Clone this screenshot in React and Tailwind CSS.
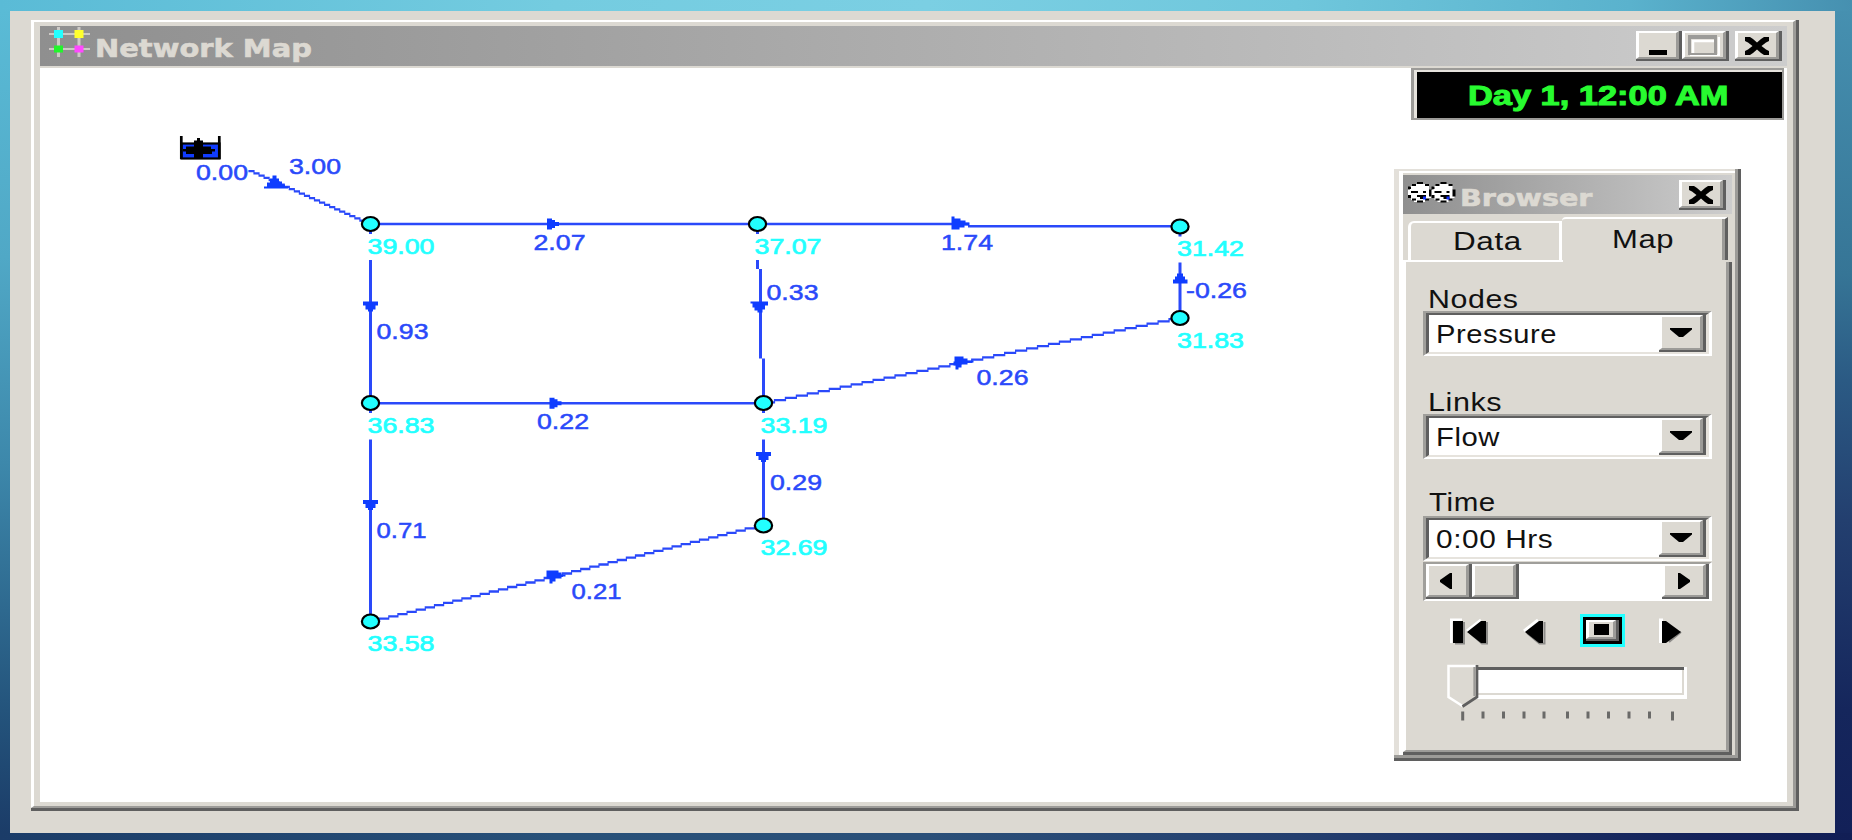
import React, { useLayoutEffect, useRef, useState } from "react";

/* Text stretched horizontally to a given width, like a scaled bitmap font. */
function Fit({ w, className = "", children }) {
  const ref = useRef(null);
  const [scale, setScale] = useState(1);
  useLayoutEffect(() => {
    const natural = ref.current.offsetWidth;
    if (natural) setScale(w / natural);
  }, [w]);
  return (
    <div className="h-[25px] w-0 overflow-visible whitespace-nowrap">
      <span
        ref={ref}
        className={"inline-block origin-left " + className}
        style={{ transform: `scaleX(${scale})` }}
      >
        {children}
      </span>
    </div>
  );
}

const ui = "font-['Liberation_Sans',Arial,sans-serif] text-[26px] leading-[26px] tracking-[0.5px] text-[#111]";

function Bevel({ className = "", children }) {
  return (
    <div className={"shrink-0 border-b-2 border-r-3 border-[#5f5f5f] bg-[#dcd9d2] " + className}>
      <div className="flex h-full w-full items-center justify-center border-b-2 border-l-3 border-r-3 border-t-2 border-b-[#9c9b98] border-l-white border-r-[#9c9b98] border-t-white">
        {children}
      </div>
    </div>
  );
}

function CloseGlyph() {
  return (
    <svg className="mt-px h-[18px] w-6" viewBox="0 0 24 18" fill="#000">
      <path d="M0 0h5l3 2 4 3.500 4-3.500 3-2h5v4l-3 1.500-4.500 3.500 4.500 3.500 3 1.500v4h-5l-3-2-4-3.500-4 3.500-3 2H0v-4l3-1.500L7.500 9 3 5.500 0 4z" />
    </svg>
  );
}

function NetworkIcon() {
  return (
    <svg className="h-8 w-[41px]" viewBox="0 0 41 32">
      <path d="M8 1h3v30H8zM28.500 1h3v30h-3zM0 7h41v2H0zM0 22h41v2H0z" fill="#ccc9c5" />
      <rect x="5" y="4" width="9" height="8" fill="#2ff" />
      <rect x="25.500" y="4" width="9" height="8" fill="#ffff2c" />
      <rect x="5" y="19.500" width="9" height="7" fill="#22f52c" />
      <rect x="25.500" y="19.500" width="9" height="7" fill="#ff48ff" />
    </svg>
  );
}

function Face({ x }) {
  return (
    <g transform={`translate(${x} 0)`}>
      <path d="M6 2h12v2h3v4h2v8h-2v2h-4v2H6v-2H3v-2H0V8h2V4h4z" fill="#fff" />
      <path
        d="M9 0h6v2H9zM4 2h4v2H4zM17 2h4v2h-4zM0 4.500h3v2.500H0zM0 13h3v3H0zM4 16.500h4v2H4zM9 18.500h6v2H9zM17 16.500h4v2h-4zM21 7.500h3v7h-3zM3 9h7v2H3zM15 9h3v2h-3zM9 13h9v4H12v-2H9z"
        fill="#000"
      />
      <rect x="15" y="14.500" width="3" height="3" fill="#1030ff" />
    </g>
  );
}

function FacesIcon() {
  return (
    <svg className="h-[21px] w-12" viewBox="0 0 48 21">
      <Face x={0} />
      <Face x={23.500} />
    </svg>
  );
}

/* Aliased line made of one horizontal run for each pixel row. */
function stairs(x0, y0, x1, y1) {
  const n = Math.max(1, Math.round(Math.abs(y1 - y0) / 2.23));
  const run = (x1 - x0) / n;
  let d = "";
  for (let i = 0; i < n; i++) {
    const y = y0 + ((y1 - y0) * (i + 0.5)) / n;
    d += `M${(x0 + run * i - 0.6).toFixed(1)} ${y.toFixed(1)}h${(run + 1.2).toFixed(1)}`;
  }
  return d;
}

const junctions = [
  { x: 370.5, y: 224, v: "39.00", w: 67, spur: true },
  { x: 757.5, y: 224, v: "37.07", w: 67, spur: true },
  { x: 1180, y: 226.5, v: "31.42", w: 67, spur: true },
  { x: 1180, y: 318, v: "31.83", w: 67 },
  { x: 370.5, y: 403, v: "36.83", w: 67, spur: true },
  { x: 763.5, y: 403, v: "33.19", w: 67, spur: true },
  { x: 763.5, y: 525.5, v: "32.69", w: 67 },
  { x: 370.5, y: 621.5, v: "33.58", w: 67 },
];

const flows = [
  [197, 179.500, 50, "0.00"],
  [290, 173.500, 50, "3.00"],
  [534.500, 249.500, 50, "2.07"],
  [942, 249.500, 50, "1.74"],
  [377.500, 339, 50, "0.93"],
  [767.500, 299.500, 50, "0.33"],
  [1187, 297.500, 59, "-0.26"],
  [538, 428.500, 50, "0.22"],
  [977.500, 384.500, 50, "0.26"],
  [377.500, 537.500, 48, "0.71"],
  [771, 489.500, 50, "0.29"],
  [572.500, 598.500, 48, "0.21"],
];

const down = (x, y) => `M${x - 7.5} ${y}h15v4h-2.500v4h-2.500v2h-5v-2h-2.500v-4h-2.500z`;
const right = (x, y) => `M${x} ${y - 5.5}h5v1.500h3v2h4v4h-4v2h-3v1.500h-5z`;

function NetworkDiagram() {
  return (
    <svg className="absolute inset-0 h-[734px] w-[1747px]" viewBox="40 68 1747 734">
      <g stroke="#2a49fa" fill="none">
        <path
          strokeWidth="2.400"
          d="M370 224H757M757 224H969M968 226.200H1180M370 403.200H763"
        />
        <path
          strokeWidth="3"
          d="M370.500 260V403M370.500 439.500V621M757.500 260V269M760.500 269V358.500M763.500 358.500V403M763.500 439.500V525M1180 262.500V318"
        />
        <g strokeWidth="2.300">
          <path d={stairs(249, 170, 370, 224)} />
          <path d={stairs(763.500, 403.500, 1180, 318)} />
          <path d={stairs(370.500, 622, 763.500, 525)} />
        </g>
      </g>
      <g fill="#0f3dff">
        <path d={right(547, 224)} />
        <path d={right(549.500, 403.300)} />
        <path d="M951.500 216.500h3v2h6v2h5v2h4v3h-5v2h-5v2h-8z" />
        <path d="M954.500 356.500h9v2h4v2h6v2h-6v2h-6v3h-3v2h-3v-4h-2v-4h1z" />
        <path d="M546.500 570.500h12v2h3v2h4v2h-4v2h-6v3h-3v2h-3v-5h-3z" />
        <path d={down(370.500, 301.500)} />
        <path d={down(370.500, 500)} />
        <path d={down(763.500, 452)} />
        <path d="M750.500 301.500h17.500v4h-3v4h-2.500v3h-5v-2h-3v-3h-2v-4h-2z" />
        <path d="M1173 283.500v-4h2v-3h2v-3h6v3h2v3h2.500v4z" />
        <path d="M264 188.500v-2h3v-4h3v-4h2.500v-3h4v3h2.500v3h3v3h3v2h3v2z" />
      </g>
      <g stroke="#000" fill="#000">
        <rect x="181.500" y="143.500" width="38" height="15" fill="#103cff" strokeWidth="2.200" />
        <path strokeWidth="2.700" fill="none" d="M181.300 136V159M219.300 136V159" />
        <path
          stroke="none"
          d="M183 149h3v-2.500h8v-6h3v-2.500h3v2.500h3v6h8v2.500h4v2.500h-3v2.500h-9v5h-9v-5h-8v-2.500h-3z"
        />
      </g>
      {junctions.map((j) => (
        <g key={j.v}>
          {j.spur && <rect x={j.x - 1.5} y={j.y + 7} width="3" height="3" fill="#2a49fa" />}
          <ellipse cx={j.x} cy={j.y} rx="8.600" ry="7" fill="#2ff" stroke="#000" strokeWidth="2.200" />
          <text
            x={j.x - 3}
            y={j.y + 29.5}
            textLength={j.w}
            lengthAdjust="spacingAndGlyphs"
            fill="#2ff"
            className="font-['Liberation_Sans',Arial,sans-serif] text-[22px]"
            stroke="#2ff"
            strokeWidth="0.700"
          >
            {j.v}
          </text>
        </g>
      ))}
      {flows.map(([x, y, w, t]) => (
        <text
          key={x + t}
          x={x - 1}
          y={y}
          textLength={w + 2}
          lengthAdjust="spacingAndGlyphs"
          fill="#2a49fa"
          stroke="#2a49fa"
          strokeWidth="0.500"
          className="font-['Liberation_Sans',Arial,sans-serif] text-[22px]"
        >
          {t}
        </text>
      ))}
    </svg>
  );
}

function Combo({ w, children }) {
  return (
    <div className="h-[45px] w-[289px] border-b-2 border-l-3 border-r-3 border-t-2 border-b-white border-l-[#a09f9b] border-r-white border-t-[#a09f9b]">
      <div className="flex h-full border-b-2 border-l-3 border-r-3 border-t-2 border-b-[#e6e3dd] border-l-[#5f5f5f] border-r-[#e6e3dd] border-t-[#5f5f5f] bg-white">
        <div className="flex-1 pl-[7px] pt-1.5">
          <Fit w={w} className={ui}>{children}</Fit>
        </div>
        <Bevel className="w-[47px]">
          <svg className="h-[9px] w-[22px]" viewBox="0 0 22 9">
            <path d="M0 0h22v1.500l-9 7.500H9L0 1.500z" />
          </svg>
        </Bevel>
      </div>
    </div>
  );
}

function BrowserPanel() {
  return (
    <div className="absolute left-[1354px] top-[101px] h-[592px] w-[347px] border-b-3 border-r-3 border-[#5f5f5f] bg-[#e3e0da]">
      <div className="h-full border-b-3 border-r-3 border-[#9c9b98] pl-[5px] pt-0.5">
        <div className="flex h-full flex-col border-l-4 border-t-2 border-white bg-[#dcd9d2] pr-[3px] pt-0.5">
          <div className="flex h-[39px] shrink-0 bg-linear-to-r from-[#8f8f8f] to-[#cdcdcd] pl-[5px] pr-1.5 pt-[5px]">
            <div className="w-[52px] pt-[2px]">
              <FacesIcon />
            </div>
            <div className="flex-1 pt-[5px]">
              <Fit
                w={133}
                className="font-['DejaVu_Sans',Verdana,sans-serif] text-[23px] font-bold leading-[26px] text-[#dcd9d2] [-webkit-text-stroke:0.6px_#dcd9d2]"
              >
                Browser
              </Fit>
            </div>
            <Bevel className="h-[30px] w-[47px]">
              <CloseGlyph />
            </Bevel>
          </div>

          <div className="mt-[3px] flex h-[43px] shrink-0 items-end pl-[5px]">
            <div className="h-[39px] w-[154px] rounded-tl-[6px] border-l-3 border-r-3 border-t-2 border-white pl-[42px] pt-[5px]">
              <Fit w={69} className={ui}>Data</Fit>
            </div>
            <div className="h-[43px] w-[166px] rounded-tl-[4px] border-r-3 border-t-2 border-r-[#5f5f5f] border-t-white">
              <div className="h-full border-r-3 border-[#9c9b98] pl-[50px] pt-[7px]">
                <Fit w={62} className={ui}>Map</Fit>
              </div>
            </div>
          </div>

          <div className="h-0.5 w-[160px] shrink-0 bg-white" />
          <div className="h-[493px] shrink-0 border-b-3 border-r-3 border-[#5f5f5f]">
            <div className="h-full border-b-2 border-l-3 border-r-3 border-b-[#9c9b98] border-l-white border-r-[#9c9b98] pl-[17px]">
              <div className="h-[49px] pl-[5px] pt-6">
                <Fit w={91} className={ui}>Nodes</Fit>
              </div>
              <Combo w={121}>Pressure</Combo>
              <div className="h-[58px] pl-[5px] pt-[33px]">
                <Fit w={74} className={ui}>Links</Fit>
              </div>
              <Combo w={64}>Flow</Combo>
              <div className="h-[57px] pl-[6px] pt-[30px]">
                <Fit w={67} className={ui}>Time</Fit>
              </div>
              <Combo w={117}>0:00 Hrs</Combo>

              <div className="mt-px flex h-[39px] w-[289px] border-b-2 border-l-3 border-r-3 border-t-2 border-b-white border-l-[#a09f9b] border-r-white border-t-[#a09f9b] bg-white">
                <Bevel className="w-[46px]">
                  <svg className="mr-1 h-4 w-3" viewBox="0 0 12 16">
                    <path d="M12 0v16h-2L0 9V7L10 0z" />
                  </svg>
                </Bevel>
                <Bevel className="w-[47px]" />
                <div className="flex-1" />
                <Bevel className="w-[47px]">
                  <svg className="h-4 w-3" viewBox="0 0 12 16">
                    <path d="M0 0v16h2l10-7V7L2 0z" />
                  </svg>
                </Bevel>
              </div>

              <div className="mt-[13px] flex h-[33px] items-center pl-[27px]">
                <svg className="mt-0.5 h-[27px] w-[40px]" viewBox="0 0 40 27">
                  <path d="M1 25V2h11M17 13L31 2" stroke="#fff" strokeWidth="3" fill="none" />
                  <path d="M5 25.500h9V4M37 4v21.500h-5L20 15" stroke="#8d8c89" strokeWidth="2" fill="none" />
                  <path d="M3 3h10v22H3zM17 14L31 3h5v22h-5z" />
                </svg>
                <svg className="ml-[32px] mt-0.5 h-[27px] w-[26px]" viewBox="0 0 26 27">
                  <path d="M2 13L16 2" stroke="#fff" strokeWidth="3" fill="none" />
                  <path d="M22.500 4v21.500h-5L5 15" stroke="#8d8c89" strokeWidth="2" fill="none" />
                  <path d="M3 14L17 3h4v22h-4z" />
                </svg>
                <div className="ml-8 h-[33px] w-[45px] border-3 border-[#2ff]">
                  <div className="h-full border-3 border-black">
                    <Bevel className="h-full">
                      <div className="h-[11px] w-[15px] shrink-0 bg-black" />
                    </Bevel>
                  </div>
                </div>
                <svg className="ml-[34px] mt-0.5 h-[27px] w-6" viewBox="0 0 24 27">
                  <path d="M1.500 25V2H4" stroke="#fff" strokeWidth="3" fill="none" />
                  <path d="M10 24L22 14" stroke="#8d8c89" strokeWidth="2" fill="none" />
                  <path d="M3 3h4l15 11L7 25H3z" />
                </svg>
              </div>

              <svg className="ml-[22px] mt-[17px] h-[60px] w-[246px]" viewBox="0 0 246 60">
                <rect x="20" y="3" width="222" height="32" fill="#fff" />
                <path d="M30 3h209v3H30z" fill="#5f5f5f" />
                <path d="M30 31h209V6h-2v23H30z" fill="#dcd9d2" />
                <path d="M2 1h31v32L18 43 2 33z" fill="#dcd9d2" />
                <path d="M31 2H3.500v31l14 9" stroke="#fff" strokeWidth="2.500" fill="none" />
                <path d="M32 1v32L17.500 42.500" stroke="#5f5f5f" strokeWidth="2.700" fill="none" />
                <path d="M29.500 3v29" stroke="#9c9b98" strokeWidth="2.300" />
                <path
                  d="M17.700 47.500v9M38 47.500v7M58.500 47.500v7M79 47.500v7M99 47.500v7M122.500 47.500v7M143 47.500v7M163.500 47.500v7M184 47.500v7M204.500 47.500v7M227.500 47.500v9"
                  stroke="#6a6a68"
                  strokeWidth="3"
                />
              </svg>
            </div>
          </div>
        </div>
      </div>
    </div>
  );
}

function MapWindow() {
  return (
    <div className="h-[791px] w-[1768px] border-b-3 border-r-3 border-[#5f5f5f]">
      <div className="flex h-full flex-col gap-0.5 border-b-2 border-l-3 border-r-3 border-t-2 border-b-[#9c9b98] border-l-white border-r-[#9c9b98] border-t-white px-1.5 pb-1 pt-1">
        <div className="flex h-10 shrink-0 bg-linear-to-r from-[#8f8f8f] to-[#cdcdcd] pl-[9px] pr-[5px]">
          <NetworkIcon />
          <div className="flex-1 pl-[5px] pt-[10px]">
            <Fit
              w={217}
              className="font-['DejaVu_Sans',Verdana,sans-serif] text-[24px] font-bold leading-[26px] text-[#dcd9d2] [-webkit-text-stroke:0.6px_#dcd9d2]"
            >
              Network Map
            </Fit>
          </div>
          <div className="flex pt-[5px]">
            <Bevel className="h-[30px] w-[46px]">
              <div className="ml-px mt-[15px] h-[5px] w-[18px] bg-black" />
            </Bevel>
            <Bevel className="h-[30px] w-[47px]">
              <svg className="h-[21px] w-8" viewBox="0 0 32 21">
                <path d="M2 20.500H31V2" stroke="#fff" strokeWidth="2.500" fill="none" />
                <path d="M5 19V6h22" stroke="#fff" strokeWidth="2.500" fill="none" />
                <path d="M0 0h29v20H0zM3 4v14h23V4z" fill="#9c9b98" fillRule="evenodd" />
              </svg>
            </Bevel>
            <Bevel className="ml-[6px] h-[30px] w-[47px]">
              <CloseGlyph />
            </Bevel>
          </div>
        </div>

        <div className="relative flex flex-1 items-start justify-end bg-white pr-[3px]">
          <NetworkDiagram />
          <div className="h-[52px] w-[373px] border-2 border-l-3 border-[#9c9b98]">
            <div className="h-full border-l-3 border-t-2 border-[#e6e3dd] bg-black pl-[51px] pt-[11px]">
              <Fit
                w={261}
                className="font-['Liberation_Sans',Arial,sans-serif] text-[27px] font-bold leading-[27px] text-[#28fb30] [-webkit-text-stroke:1px_#28fb30]"
              >
                Day 1, 12:00 AM
              </Fit>
            </div>
          </div>
          <BrowserPanel />
        </div>
      </div>
    </div>
  );
}

export default function App() {
  return (
    <div className="flex h-[840px] w-[1852px] flex-col overflow-hidden">
      <div className="h-[11px] shrink-0 bg-[linear-gradient(90deg,#5abbd6_0%,#74cce0_30%,#7bcfe3_50%,#6fc7dc_70%,#5ab2cd_88%,#4690b0_100%)]" />
      <div className="flex min-h-0 flex-1">
        <div className="w-2.5 shrink-0 bg-[linear-gradient(180deg,#5abbd6_0%,#50a8c6_30%,#3d88ab_55%,#24547c_85%,#1b3c68_100%)]" />
        <div className="flex-1 bg-[#dcd9d2] pl-[21px] pt-[9px]">
          <MapWindow />
        </div>
        <div className="w-[17px] shrink-0 bg-[linear-gradient(180deg,#4690b0_0%,#367596_32%,#2b5a84_45%,#233f6f_62%,#15265c_85%,#122058_100%)]" />
      </div>
      <div className="h-[7px] shrink-0 bg-[linear-gradient(90deg,#1b3c68_0%,#285179_30%,#2b5079_50%,#243f6f_70%,#14225a_92%,#111e55_100%)]" />
    </div>
  );
}
